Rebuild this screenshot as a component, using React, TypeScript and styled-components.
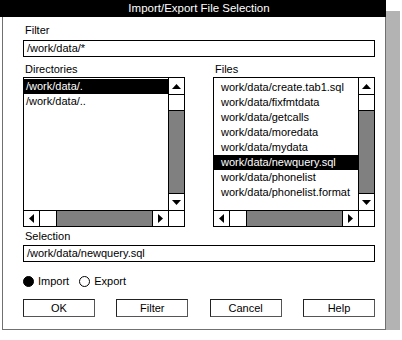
import styled, { createGlobalStyle } from 'styled-components';

const GlobalStyle = createGlobalStyle`
  body {
    margin: 0;
    background: #ffffff;
    font-family: "Liberation Sans", Arial, sans-serif;
    font-size: 11px;
    color: #000;
  }
`;

const Dialog = styled.div`
  width: 386px;
  height: 330px;
  display: flex;
  flex-direction: column;
  box-shadow: 14px 11px 0 #b3b3b3;
  background: #fff;
`;

const TitleBar = styled.div`
  height: 17px;
  background: #000;
  color: #fff;
  font-size: 11.5px;
  line-height: 17px;
  text-align: center;
  padding-left: 12px;
`;

const Body = styled.div`
  flex: 1;
  margin-left: 2px;
  border: 1px solid #707070;
  border-top: none;
  padding: 6px 10px 0 20px;
  display: flex;
  flex-direction: column;
`;

const Label = styled.div<{ $top?: number }>`
  height: 14px;
  line-height: 14px;
  padding-left: 2px;
  margin-top: ${(p) => p.$top ?? 0}px;
`;

const TextField = styled.div<{ $top?: number }>`
  height: 17px;
  box-sizing: border-box;
  border: 1px solid #000;
  line-height: 15px;
  padding-left: 3px;
  margin-top: ${(p) => p.$top ?? 0}px;
`;

const Columns = styled.div`
  display: grid;
  grid-template-columns: 162px 162px;
  justify-content: space-between;
  margin-top: 5px;
`;

const Column = styled.div`
  display: flex;
  flex-direction: column;
`;

const ScrollList = styled.div`
  margin-top: 1px;
  height: 150px;
  box-sizing: border-box;
  border: 1px solid #000;
  display: grid;
  grid-template-columns: 1fr 16px;
  grid-template-rows: 1fr 16px;
`;

const Items = styled.div<{ $pad: number }>`
  padding-top: ${(p) => p.$pad}px;
  overflow: hidden;
`;

const Item = styled.div<{ $selected?: boolean; $indent: number }>`
  height: 15px;
  line-height: 15px;
  padding-left: ${(p) => p.$indent}px;
  white-space: nowrap;
  background: ${(p) => (p.$selected ? '#000' : 'transparent')};
  color: ${(p) => (p.$selected ? '#fff' : '#000')};
`;

const VBar = styled.div`
  border-left: 1px solid #000;
  display: flex;
  flex-direction: column;
`;

const HBar = styled.div`
  border-top: 1px solid #000;
  display: flex;
`;

const Corner = styled.div`
  border-left: 1px solid #000;
  border-top: 1px solid #000;
`;

const ArrowBox = styled.div<{ $edge: 'top' | 'bottom' | 'left' | 'right' }>`
  flex: none;
  width: ${(p) => (p.$edge === 'left' || p.$edge === 'right' ? '15px' : 'auto')};
  height: ${(p) => (p.$edge === 'top' || p.$edge === 'bottom' ? '16px' : 'auto')};
  display: flex;
  align-items: center;
  justify-content: center;
  background: #fff;
  border-${(p) => p.$edge}: 1px solid #000;
`;

const Thumb = styled.div<{ $vertical?: boolean }>`
  flex: none;
  background: #fff;
  ${(p) =>
    p.$vertical
      ? 'height: 15px; border-bottom: 1px solid #000;'
      : 'width: 16px; border-right: 1px solid #000;'}
`;

const Trough = styled.div`
  flex: 1;
  background: #808080;
`;

const RadioRow = styled.div`
  display: flex;
  align-items: center;
  height: 14px;
  margin-top: 12px;
  gap: 4px;
`;

const RadioDot = styled.span<{ $on?: boolean }>`
  width: 11px;
  height: 11px;
  box-sizing: border-box;
  border-radius: 50%;
  border: 1px solid #000;
  background: ${(p) => (p.$on ? '#000' : '#fff')};
`;

const RadioLabel = styled.span`
  line-height: 14px;
  margin-right: 6px;
`;

const ButtonRow = styled.div`
  display: flex;
  justify-content: space-between;
  margin-top: 11px;
`;

const Button = styled.div`
  width: 72px;
  height: 18px;
  box-sizing: border-box;
  border: 1px solid #222;
  border-right-color: #555;
  border-bottom-color: #555;
  text-align: center;
  line-height: 16px;
`;

type Dir = 'up' | 'down' | 'left' | 'right';

const Arrow = ({ dir }: { dir: Dir }) => {
  const pts: Record<Dir, string> = {
    up: '0,5 9,5 4.5,0',
    down: '0,0 9,0 4.5,5',
    left: '5,0 5,9 0,4.5',
    right: '0,0 0,9 5,4.5',
  };
  const vert = dir === 'up' || dir === 'down';
  return (
    <svg width={vert ? 9 : 5} height={vert ? 5 : 9}>
      <polygon points={pts[dir]} fill="#000" />
    </svg>
  );
};

const ListBox = ({
  items,
  selected,
  pad,
  indent,
}: {
  items: string[];
  selected: number;
  pad: number;
  indent: number;
}) => (
  <ScrollList>
    <Items $pad={pad}>
      {items.map((t, i) => (
        <Item key={t} $selected={i === selected} $indent={indent}>
          {t}
        </Item>
      ))}
    </Items>
    <VBar>
      <ArrowBox $edge="bottom">
        <Arrow dir="up" />
      </ArrowBox>
      <Thumb $vertical />
      <Trough />
      <ArrowBox $edge="top">
        <Arrow dir="down" />
      </ArrowBox>
    </VBar>
    <HBar>
      <ArrowBox $edge="right">
        <Arrow dir="left" />
      </ArrowBox>
      <Thumb />
      <Trough />
      <ArrowBox $edge="left">
        <Arrow dir="right" />
      </ArrowBox>
    </HBar>
    <Corner />
  </ScrollList>
);

const dirs = ['/work/data/.', '/work/data/..'];
const files = [
  'work/data/create.tab1.sql',
  'work/data/fixfmtdata',
  'work/data/getcalls',
  'work/data/moredata',
  'work/data/mydata',
  'work/data/newquery.sql',
  'work/data/phonelist',
  'work/data/phonelist.format',
];

function App() {
  return (
    <>
      <GlobalStyle />
      <Dialog>
        <TitleBar>Import/Export File Selection</TitleBar>
        <Body>
          <Label>Filter</Label>
          <TextField $top={3}>/work/data/*</TextField>
          <Columns>
            <Column>
              <Label>Directories</Label>
              <ListBox items={dirs} selected={0} pad={1} indent={2} />
            </Column>
            <Column>
              <Label>Files</Label>
              <ListBox items={files} selected={5} pad={2} indent={7} />
            </Column>
          </Columns>
          <Label $top={2}>Selection</Label>
          <TextField $top={2}>/work/data/newquery.sql</TextField>
          <RadioRow>
            <RadioDot $on />
            <RadioLabel>Import</RadioLabel>
            <RadioDot />
            <RadioLabel>Export</RadioLabel>
          </RadioRow>
          <ButtonRow>
            <Button>OK</Button>
            <Button>Filter</Button>
            <Button>Cancel</Button>
            <Button>Help</Button>
          </ButtonRow>
        </Body>
      </Dialog>
    </>
  );
}

export default App;
